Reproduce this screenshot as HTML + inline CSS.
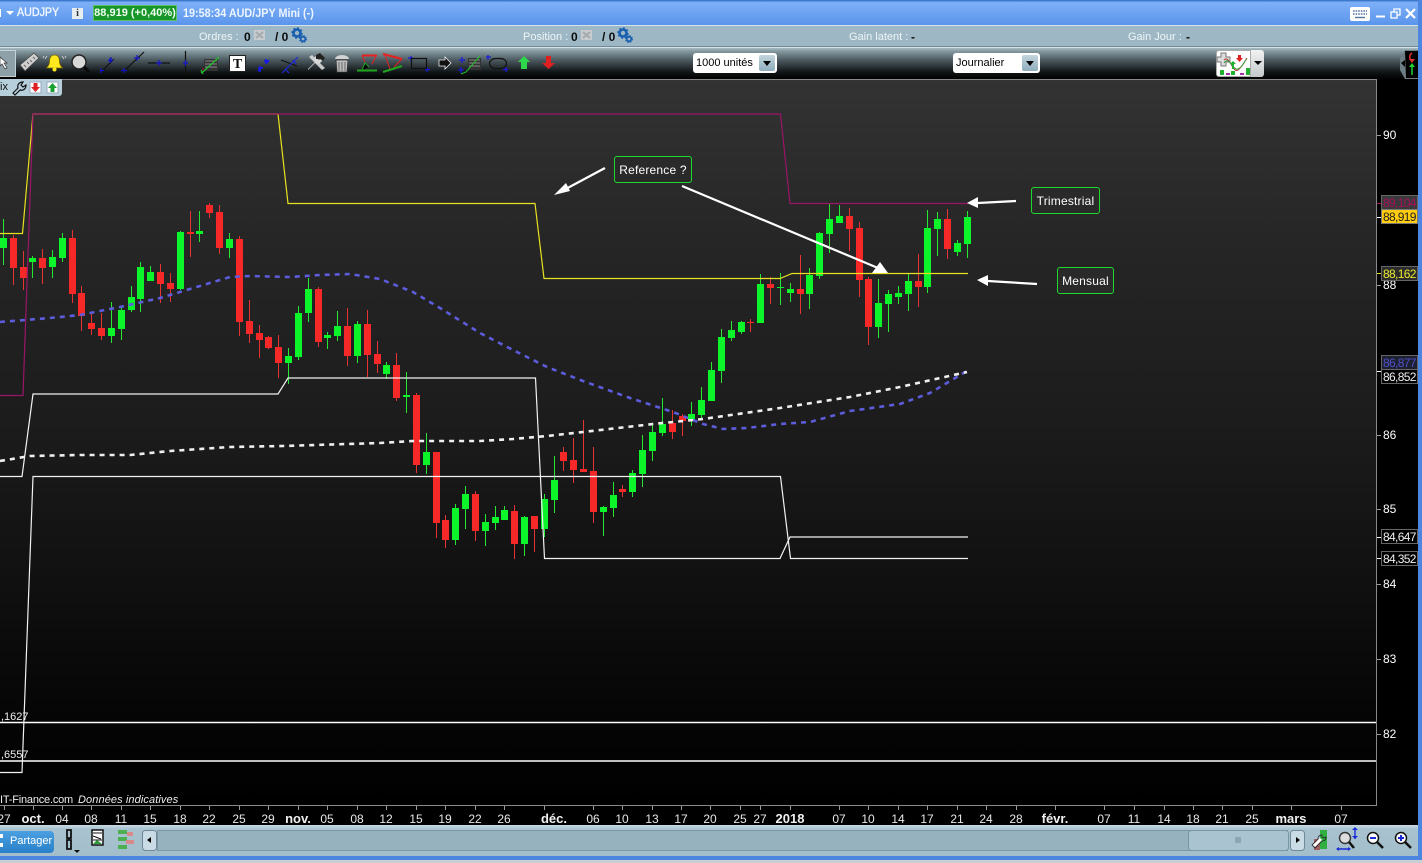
<!DOCTYPE html>
<html><head><meta charset="utf-8"><style>
html,body{margin:0;padding:0;background:#000}
#p{position:relative;width:1422px;height:863px;overflow:hidden;background:#000;font-family:"Liberation Sans",sans-serif;font-size:12px}
#p div,#p span.a{position:absolute;white-space:nowrap}
#tb{left:0;top:0;width:1422px;height:25px;background:linear-gradient(#3d78cf 0,#3d78cf 1px,#7eb0f8 2px,#5c96ec 24px)}
#r2{left:0;top:25px;width:1418px;height:22px;background:#9db8c4;border-top:1px solid #d5e3ea;border-bottom:1px solid #6f8a96;box-sizing:border-box}
#r3{left:0;top:47px;width:1418px;height:32px;background:linear-gradient(#a9bcc4 0,#8599a0 3px,#4c5a60 12px,#111517 24px,#000 31px);border-top:1px solid #d5e3ea;box-sizing:border-box}
#rb{left:1418px;top:0;width:4px;height:860px;background:#4d86e0}
.l{color:#eef4f7;font-size:11px;line-height:14px}
.b{color:#0b0b0b;font-weight:bold;font-size:12px;line-height:14px}
.sel{top:53px;height:20px;background:#fff;border-radius:3px;color:#000;font-size:11px;line-height:21px;padding-left:3px;box-sizing:border-box}
.sb{top:2px;width:16px;height:16px;background:linear-gradient(#c3d5de,#8fadbc);border-radius:2px}
.sb:after{content:"";position:absolute;left:4px;top:6px;border:4px solid transparent;border-top:5px solid #000;border-bottom:0}
.ax{color:#fff;font-size:12px;line-height:14px}
.t{top:812px;color:#e8e8e8;font-size:12px;transform:translateX(-50%);line-height:14px}
.t b{color:#f0f0f0;font-size:13px}
.vb{left:1381px;width:37px;height:15px;box-sizing:border-box;border:1px solid #666;font-size:12px;line-height:14px;text-indent:1px;letter-spacing:-.65px}
.n{border:1px solid #1fd92f;border-radius:3px;background:#2a2a2a;color:#fff;font-size:12px;text-align:center;box-sizing:border-box;letter-spacing:.2px}
</style></head><body><div id="p">

<div style="left:0;top:79px;width:1376px;height:727px;background:linear-gradient(#333 0,#262626 160px,#1c1c1c 340px,#0f0f0f 520px,#050505 640px,#000 727px)"></div>
<div id="tb"></div><div id="r2"></div><div id="r3"></div><div id="rb"></div>

<!-- chart -->
<svg style="position:absolute;left:0;top:0" width="1422" height="863" viewBox="0 0 1422 863">
<g fill="none">
<path stroke="#e63232" stroke-width="1" d="M13.5 235V285M23.5 251V290M42.5 249V284M72.5 230V303M81.5 286V331M91.5 313V335M101.5 313V340M160.5 264V303M170.5 273V302M190.5 211V257M209.5 203V218M219.5 205V254M239.5 236V336M249.5 300V343M259.5 325V358M268.5 336V349M278.5 335V378M318.5 287V347M347.5 308V366M367.5 310V377M377.5 341V373M396.5 353V401M416.5 393V473M436.5 452V538M445.5 515V548M475.5 491V541M514.5 505V559M534.5 516V552M563.5 447V471M573.5 438V483M583.5 420V472M593.5 447V523M622.5 485V497M672.5 410V439M682.5 414V436M750.5 319V332M770.5 277V304M800.5 255V314M849.5 208V251M859.5 222V297M868.5 277V345M918.5 254V307M947.5 209V259"/>
<path stroke="#26e832" stroke-width="1" d="M3.5 219V265M32.5 256V278M52.5 250V278M62.5 233V262M111.5 302V343M121.5 307V340M131.5 286V312M140.5 262V312M150.5 266V281M180.5 231V290M199.5 211V242M229.5 233V258M288.5 348V384M298.5 306V360M308.5 278V322M327.5 332V349M337.5 311V341M357.5 321V363M386.5 362V379M406.5 372V413M426.5 433V474M455.5 504V545M465.5 486V529M485.5 514V546M495.5 506V530M504.5 506V520M524.5 516V556M544.5 494V537M554.5 456V513M603.5 506V536M613.5 482V517M632.5 470V497M642.5 435V487M652.5 425V461M662.5 398V436M691.5 402V426M701.5 387V419M711.5 362V401M721.5 329V383M731.5 321V341M741.5 321V334M760.5 274V323M780.5 273V305M790.5 283V302M809.5 268V309M819.5 232V279M829.5 204V253M839.5 205V223M878.5 279V338M888.5 290V332M898.5 286V304M908.5 274V311M927.5 210V293M937.5 212V256M957.5 240V256M967.5 211V258"/>
<path stroke="#f62828" stroke-width="7" d="M13.5 238V268M23.5 267V278M42.5 258V268M72.5 238V294M81.5 293V316M91.5 323V329M101.5 328V336M160.5 272V284M170.5 283V289M190.5 232V234M209.5 205V213M219.5 212V248M239.5 239V322M249.5 321V334M259.5 333V340M268.5 337V348M278.5 347V363M318.5 289V342M347.5 326V356M367.5 324V355M377.5 354V364M396.5 365V398M416.5 395V465M436.5 452V523M445.5 520V540M475.5 494V531M514.5 511V544M534.5 516V529M563.5 452V461M573.5 460V470M583.5 469V472M593.5 471V512M622.5 489V492M672.5 423V432M682.5 416V421M750.5 322V323M770.5 284V288M800.5 289V294M849.5 216V229M859.5 228V280M868.5 279V327M918.5 281V287M947.5 219V249"/>
<path stroke="#0cf42a" stroke-width="7" d="M3.5 238V248M32.5 258V262M52.5 257V267M62.5 238V258M111.5 328V336M121.5 310V329M131.5 297V310M140.5 267V299M150.5 272V281M180.5 232V289M199.5 231V234M229.5 239V248M288.5 356V363M298.5 313V357M308.5 289V313M327.5 335V338M337.5 326V336M357.5 324V356M386.5 365V374M406.5 395V397M426.5 452V465M455.5 508V540M465.5 494V509M485.5 522V531M495.5 517V523M504.5 510V520M524.5 517V544M544.5 499V529M554.5 480V500M603.5 507V512M613.5 495V508M632.5 473V492M642.5 450V474M652.5 432V451M662.5 424V433M691.5 414V420M701.5 400V415M711.5 370V401M721.5 337V371M731.5 330V338M741.5 322V332M760.5 284V323M780.5 287V288M790.5 289V293M809.5 275V294M819.5 233V276M829.5 219V234M839.5 216V223M878.5 303V327M888.5 294V304M898.5 293V297M908.5 281V294M927.5 228V287M937.5 219V229M957.5 243V252M967.5 217V244"/>
<path stroke="#e8e020" stroke-width="1.2" d="M0 233.5H22.5L33 114H278L288 203.5H535L544 278.5H780L792 273.5H968"/>
<path stroke="#9a1568" stroke-width="1.2" d="M0 395.5H23L33 114H780.5L790 203.5H968"/>
<path stroke="#f2f2f2" stroke-width="1.2" d="M0 476.5H22L33 394H278L288 378H535.5L544.5 558.5H780L790 537H968"/>
<path stroke="#f2f2f2" stroke-width="1.2" d="M0 772.5H22L33 476.5H780.5L790.5 558.5H968"/>
<path stroke="#fff" stroke-width="1.4" d="M0 722.5H1376M0 761H1376"/>
<path stroke="#5c5cdc" stroke-width="2.6" stroke-dasharray="5 5" stroke-linejoin="round" d="M0 322L50 318L80 315L120 307L160 298L200 286L230 277L250 276L290 277L320 275L350 274L380 279L413 292L440 308L480 333L513 350L547 367L583 381L630 398L673 412L703 424L723 429L747 428L780 424L810 422L850 411L900 404L930 393L967 371"/>
<path stroke="#efefef" stroke-width="2.6" stroke-dasharray="5 5" stroke-linejoin="round" d="M0 461L30 456L80 455L130 455L170 451L230 447L283 446L380 443L413 441L447 441L480 441L513 439L547 436L583 432L653 424L703 419L780 408L850 397L900 387L967 372"/>
<path stroke="#fff" stroke-width="2.2" d="M605 168L562 191M682 186L878 268M1016 201L978 203M1037 284L988 281"/>
</g>
<path fill="#fff" d="M554 195L566 183L570 191ZM888 273L872 273L880 262ZM967 203L978 197L978 208ZM977 280L988 275L988 286Z"/>
<!-- frame -->
<path fill="none" stroke="#8a8a8a" d="M0 79.5H1376.5V805.5H0"/>
<path stroke="#9a9a9a" fill="none" d="M4.5 806V810M33.5 806V810M62.5 806V810M91.5 806V810M121.5 806V810M150.5 806V810M180.5 806V810M209.5 806V810M239.5 806V810M268.5 806V810M298.5 806V810M327.5 806V810M357.5 806V810M386.5 806V810M416.5 806V810M445.5 806V810M475.5 806V810M504.5 806V810M544.5 806V810M593.5 806V810M622.5 806V810M652.5 806V810M681.5 806V810M710.5 806V810M740.5 806V810M760.5 806V810M790.5 806V810M839.5 806V810M868.5 806V810M898.5 806V810M927.5 806V810M957.5 806V810M986.5 806V810M1016.5 806V810M1055.5 806V810M1104.5 806V810M1134.5 806V810M1164.5 806V810M1193.5 806V810M1222.5 806V810M1252.5 806V810M1291.5 806V810M1341.5 806V810M1377 135.5H1381M1377 285.5H1381M1377 435.5H1381M1377 509.5H1381M1377 584.5H1381M1377 659.5H1381M1377 734.5H1381"/>
<path stroke="#9a1568" d="M1377 203.5H1381"/><path stroke="#fff" d="M1377 217.5H1381M1377 371.5H1381M1377 537.5H1381M1377 558.5H1381"/><path stroke="#e8e020" d="M1377 273.5H1381"/>
</svg>

<!-- notes -->
<div class="n" style="left:614px;top:156px;width:78px;height:27px;line-height:27px">Reference ?</div>
<div class="n" style="left:1031px;top:187px;width:69px;height:27px;line-height:27px">Trimestrial</div>
<div class="n" style="left:1057px;top:267px;width:57px;height:27px;line-height:27px">Mensual</div>

<!-- y axis -->
<div class="ax" style="left:1383px;top:128px">90</div>
<div class="ax" style="left:1383px;top:278px">88</div>
<div class="ax" style="left:1383px;top:428px">86</div>
<div class="ax" style="left:1383px;top:502px">85</div>
<div class="ax" style="left:1383px;top:577px">84</div>
<div class="ax" style="left:1383px;top:652px">83</div>
<div class="ax" style="left:1383px;top:727px">82</div>
<div class="vb" style="top:195px;background:#3a3a3a;color:#a8105f">89,104</div>
<div class="vb" style="top:209px;background:#ffcc10;color:#222;border-color:#777">88,919</div>
<div class="vb" style="top:266px;background:#2b2b2b;color:#eaea30">88,162</div>
<div class="vb" style="top:355px;background:#1d2030;color:#5050c8">86,877</div>
<div class="vb" style="top:369px;background:#000;color:#f0f0f0">86,852</div>
<div class="vb" style="top:529px;background:#000;color:#f0f0f0">84,647</div>
<div class="vb" style="top:551px;background:#000;color:#f0f0f0">84,352</div>
<div class="ax" style="left:1px;top:710px;font-size:11px;color:#eee">,1627</div>
<div class="ax" style="left:1px;top:748px;font-size:11px;color:#eee">,6557</div>
<div class="ax" style="left:0;top:793px;font-size:11px;color:#eee;letter-spacing:-.2px">IT-Finance.com</div>
<div class="ax" style="left:78px;top:793px;font-size:11px;color:#eee;letter-spacing:.1px"><i>Données indicatives</i></div>

<!-- x axis -->
<div class="t" style="left:4px">27</div><div class="t" style="left:33px"><b>oct.</b></div><div class="t" style="left:62px">04</div><div class="t" style="left:91px">08</div><div class="t" style="left:121px">11</div><div class="t" style="left:150px">15</div><div class="t" style="left:180px">18</div><div class="t" style="left:209px">22</div><div class="t" style="left:239px">25</div><div class="t" style="left:268px">29</div><div class="t" style="left:298px"><b>nov.</b></div><div class="t" style="left:327px">05</div><div class="t" style="left:357px">08</div><div class="t" style="left:386px">12</div><div class="t" style="left:416px">15</div><div class="t" style="left:445px">19</div><div class="t" style="left:475px">22</div><div class="t" style="left:504px">26</div><div class="t" style="left:554px"><b>déc.</b></div><div class="t" style="left:593px">06</div><div class="t" style="left:622px">10</div><div class="t" style="left:652px">13</div><div class="t" style="left:681px">17</div><div class="t" style="left:710px">20</div><div class="t" style="left:740px">25</div><div class="t" style="left:760px">27</div><div class="t" style="left:790px"><b>2018</b></div><div class="t" style="left:839px">07</div><div class="t" style="left:868px">10</div><div class="t" style="left:898px">14</div><div class="t" style="left:927px">17</div><div class="t" style="left:957px">21</div><div class="t" style="left:986px">24</div><div class="t" style="left:1016px">28</div><div class="t" style="left:1055px"><b>févr.</b></div><div class="t" style="left:1104px">07</div><div class="t" style="left:1134px">11</div><div class="t" style="left:1164px">14</div><div class="t" style="left:1193px">18</div><div class="t" style="left:1222px">21</div><div class="t" style="left:1252px">25</div><div class="t" style="left:1291px"><b>mars</b></div><div class="t" style="left:1341px">07</div>

<!-- title bar -->
<div style="left:17px;top:6px;color:#f4f8ff;font-size:11.5px;line-height:14px;-webkit-text-stroke:.35px #f4f8ff;transform-origin:0 0;transform:scaleX(.93)">AUDJPY</div>
<div style="left:93px;top:5px;width:84px;height:16px;background:#17962a;border:1px solid #5fc06a;box-sizing:border-box;color:#f0fff0;font-size:11px;font-weight:bold;line-height:14px;text-align:center">88,919 (+0,40%)</div>
<div style="left:183px;top:6px;color:#eef5ff;font-size:12px;font-weight:bold;line-height:14px;transform-origin:0 0;transform:scaleX(.9)">19:58:34 AUD/JPY Mini (-)</div>
<div style="left:72px;top:8px;width:11px;height:11px;background:#e8eef0;color:#333;font:bold 10px/11px 'Liberation Serif',serif;text-align:center">i</div>
<svg style="position:absolute;left:0;top:0" width="1422" height="25">
<path fill="#fff" d="M6 11h8l-4 4z"/><rect x="0" y="9" width="1" height="8" fill="#fff"/>
<rect x="1350" y="7" width="20" height="14" rx="2" fill="#fff"/>
<path stroke="#5578a0" stroke-width="1.4" stroke-dasharray="1.6 1" d="M1353 11h14M1353 14h14"/><path stroke="#5578a0" stroke-width="1.4" d="M1355 17.500h10"/>
<path stroke="#fff" stroke-width="2" d="M1376 16.500h9"/>
<path fill="none" stroke="#fff" stroke-width="1.3" d="M1391 12h6v6h-6zM1394 12V9h6v6h-3"/>
<path stroke="#fff" stroke-width="2.200" d="M1406 9l9 9M1415 9l-9 9"/>
</svg>

<!-- order row -->
<div class="l" style="left:199px;top:30px">Ordres :</div><div class="b" style="left:244px;top:30px">0</div>
<div class="b" style="left:275px;top:30px">/ 0</div>
<div class="l" style="left:523px;top:30px">Position :</div><div class="b" style="left:571px;top:30px">0</div>
<div class="b" style="left:602px;top:30px">/ 0</div>
<div class="l" style="left:849px;top:30px">Gain latent :</div><div class="b" style="left:911px;top:30px">-</div>
<div class="l" style="left:1128px;top:30px">Gain Jour :</div><div class="b" style="left:1186px;top:30px">-</div>
<svg style="position:absolute;left:0;top:25px" width="700" height="22">
<rect x="254" y="5" width="11" height="10" fill="#c8ccce"/><path stroke="#a4aaae" stroke-width="2" d="M256 7l7 6M263 7l-7 6"/>
<rect x="581" y="5" width="11" height="10" fill="#c8ccce"/><path stroke="#a4aaae" stroke-width="2" d="M583 7l7 6M590 7l-7 6"/>
<g fill="none" stroke="#1a5fb0">
<circle cx="297" cy="8" r="3.500" stroke-width="2.600"/><circle cx="297" cy="8" r="5" stroke-width="1.400" stroke-dasharray="2 1.900"/>
<circle cx="303" cy="14" r="2.300" stroke-width="1.800"/><circle cx="303" cy="14" r="3.500" stroke-width="1" stroke-dasharray="1.500 1.300"/>
<circle cx="623" cy="8" r="3.500" stroke-width="2.600"/><circle cx="623" cy="8" r="5" stroke-width="1.400" stroke-dasharray="2 1.900"/>
<circle cx="629" cy="14" r="2.300" stroke-width="1.800"/><circle cx="629" cy="14" r="3.500" stroke-width="1" stroke-dasharray="1.500 1.300"/>
</g>
</svg>

<!-- toolbar -->
<div style="left:0;top:50px;width:16px;height:27px;background:#8ea1a8;border:1px solid #c4d2d8;border-left:0;box-sizing:border-box"></div>
<svg style="position:absolute;left:0;top:47px" width="570" height="32">
<path fill="#fff" stroke="#333" stroke-width=".7" d="M0 10l7 6-3 0 3 5-2 1-3-5-2 2z"/>
<path fill="#cfcfcf" stroke="#444" stroke-width=".8" d="M20 18L34 6l5 5L25 24z"/><path stroke="#666" d="M24 18l2 2M27 15l2 2M30 13l2 2M33 10l2 2"/>
<path fill="#ffe81e" stroke="#7a6a00" stroke-width=".8" d="M54.500 8c3.500 0 5 3 5 7 0 3 1.500 4 3 6H46.500c1.500-2 3-3 3-6 0-4 1.500-7 5-7z"/><circle cx="54.500" cy="22.500" r="2" fill="#ffe81e"/>
<path fill="none" stroke="#c8c8c8" d="M47 9l-2 3M62 9l2 3M44 9l-1 2M65 9l1 2"/>
<circle cx="79" cy="15" r="7" fill="#d8d8d8" stroke="#222" stroke-width="1.500"/><path stroke="#0a0a0a" stroke-width="3.200" d="M84 20l5 5"/>
<g stroke="#1516c8" stroke-width="1.200" fill="none">
<path stroke="#111" d="M102 24L114 12M123 25L144 5M148 16h22M185.500 4V29"/>
<path d="M101 21v5M100 23.500h4M110 11v5M108 13.500h5M111 10v5M124 21v5M121 23.500h6M137 8v6M134 11h6M159 13v6M156 16h6M185.500 13v6M183 16h5"/>
<path stroke="#1a1ae0" stroke-width="1.700" d="M258 24l4-4M266 17l3-4M258 21h5M260 19v6M266 12v5M264 14h5"/>
<path stroke="#111" d="M281 13l16 6"/><path stroke="#1a2ad8" stroke-width="1.200" d="M282 26L298 10M285 22l4 4M293 13l3 4"/>
<path stroke="#1a1ae0" d="M411 9v5M408 11h5M427 20v5M425 22.500h5M462 10v6M459 13h6M461 20v6M458 23h6M488 8v5M486 10h5M506 20v5M503 22.500h5"/>
</g>
<rect x="204" y="12" width="14" height="12" fill="#333"/><path stroke="#888" d="M205 14h12M205 17h12M205 20h12"/><path stroke="#22c030" fill="none" stroke-width="1.300" d="M201 26l3-2 15-14M201 23l2 4"/>
<path stroke="#c03" d="M202 22h2"/>
<rect x="229.500" y="8.500" width="16" height="16" fill="#fff" stroke="#222"/>
<text x="237.500" y="21" font-family="Liberation Serif,serif" font-size="14" font-weight="bold" text-anchor="middle" fill="#111">T</text>
<path fill="#d8d8d8" d="M308 22l7-7-1-4 4-4 2 1-3 3 2 2 3-2 1 2-4 4-4-1-7 7z"/><path fill="#222" d="M316 8l4-2 5 5-2 3-3-2-4 0z"/><path fill="#d8d8d8" d="M309 10l3-2 13 13-3 2z" opacity=".9"/>
<path fill="#bdbdbd" stroke="#333" stroke-width=".8" d="M336 13h12l-1 12h-10z"/><path fill="#d4d4d4" d="M335 12c0-2 3-4 7-4s7 2 7 4z"/><path stroke="#666" d="M339 15v9M342 15v9M345 15v9"/>
<path stroke="#e82020" stroke-width="2" d="M362 8.500h15"/><path stroke="#1fa81f" stroke-width="2" d="M357 23.500h20"/><path stroke="#e82020" d="M362 9l3 6"/><path stroke="#1fa81f" d="M362 23l3-7 4 4"/><path stroke="#e82020" d="M376 9l-4 8"/>
<path stroke="#e82020" stroke-width="2" d="M383 7l19 5"/><path stroke="#1fa81f" stroke-width="2" d="M383 25l19-6"/><path stroke="#e82020" d="M385 8l5 14M402 12l-8 8"/>
<rect x="411.500" y="11.500" width="15" height="10" fill="none" stroke="#111" stroke-width="1.200"/>
<path fill="#111" stroke="#eee" stroke-width=".8" d="M439 13h6v-3l6 6-6 6v-3h-6z"/>
<rect x="468" y="11" width="13" height="12" fill="#333"/><path stroke="#888" d="M469 13h11M469 16h11M469 19h11"/><path stroke="#22c030" fill="none" d="M461 27l5-2 14-16"/>
<rect x="489.500" y="11.500" rx="6" width="17" height="10" fill="none" stroke="#111" stroke-width="1.200"/>
<path fill="#2ed84a" d="M524 9l6 6h-3v7h-6v-7h-3z"/>
<path fill="#e02020" d="M546 9h5v7h4l-6.500 6-6.500-6h4z"/>
</svg>

<div class="sel" style="left:693px;width:84px">1000 unités<div class="sb" style="left:66px"></div></div>
<div class="sel" style="left:953px;width:87px">Journalier<div class="sb" style="left:69px"></div></div>

<div style="left:1216px;top:50px;width:35px;height:27px;background:#fff;border-radius:3px 0 0 3px;border:1px solid #aaa;box-sizing:border-box"></div>
<div style="left:1251px;top:50px;width:13px;height:27px;background:linear-gradient(#f2f2f2,#c4c8ca);border-radius:0 3px 3px 0"></div>
<svg style="position:absolute;left:1216px;top:50px" width="48" height="27">
<path d="M5 3h5v4h4v5h-4v4H5v-4H1V7h4z" fill="#ddd" stroke="#777"/>
<path fill="none" stroke="#b03030" d="M8 10c5-6 9 14 14 10s6-8 9-12"/><path fill="none" stroke="#3aa03a" d="M8 13c5-8 9 8 14 6s6-8 9-10"/>
<path fill="#1fb030" d="M14 14l3-3 3 3h-2v5h-2v-5zM4 20h4v5H4zM15 21h4v4h-4zM30 18h4v7h-4z"/><path fill="#a030a0" d="M10 23h4v2h-4zM24 23h4v2h-4z"/><path fill="#e02020" d="M22 5h3v3h2l-3.500 4L20 8h2z"/>
<path fill="#000" d="M38 11h8l-4 4z"/>
</svg>
<svg style="position:absolute;left:1400px;top:48px" width="18" height="32">
<path fill="#6d7d84" d="M0 10L5 2H18V31H5L0 22z"/><path fill="#000" d="M5 3H18V30H6z"/>
<path fill="#000" d="M1 15l4-3v7z"/>
<path stroke="#e03030" fill="none" stroke-width="1.500" d="M12 5c-3 2-3 6 0 8"/><path stroke="#20d030" fill="none" stroke-width="1.500" d="M12 27V17"/><path fill="#20d030" d="M9 19l3-4 3 4z"/><path fill="#e03030" d="M9 11l3 4 3-4z"/>
</svg>

<!-- bottom bar -->
<div style="left:0;top:825px;width:1418px;height:31px;background:linear-gradient(#c9dbe4,#a8c3cf 4px,#a3becb)"></div>
<div style="left:0;top:856px;width:1422px;height:4px;background:#4d86e0"></div>
<div style="left:0;top:860px;width:1422px;height:3px;background:#c9cfd4"></div>
<div style="left:-4px;top:831px;width:58px;height:22px;background:linear-gradient(#4aa0e0,#2a80c8);border-radius:4px;color:#fff;font-size:11px;line-height:21px;text-indent:14px">Partager</div>
<svg style="position:absolute;left:0;top:825px" width="1422" height="31">
<path fill="#fff" d="M0 9h3v4H0zM0 18h3v4H0z"/>
<path fill="none" stroke="#111" stroke-width="1.800" d="M67 5h4v8h-4zM67 15h4v9h-4zM69 13v2"/><path fill="#111" d="M74 25h6l-3 3z"/>
<rect x="92" y="5" width="11" height="15" fill="#fff" stroke="#111" stroke-width="1.500"/><path stroke="#111" d="M93 8h9M93 11l8 3M93 15h9"/><path fill="#2a9a3a" d="M93 19l4-4 5 4z"/>
<path fill="#4cb050" d="M118 5h9v4h-9zM118 12h9v4h-9zM118 20h9v4h-9z"/><path fill="#d88a8a" d="M127 7h6v4h-6zM126 15h8v4h-8z"/>
<rect x="142.500" y="5.500" width="14" height="20" rx="3" fill="#c9dbe4" stroke="#6f8a96"/><path fill="#000" d="M151 12v6l-4-3z"/>
<rect x="157.500" y="5.500" width="1130" height="20" fill="#96b2bf" stroke="#7c97a4"/>
<rect x="1188.500" y="5.500" width="100" height="20" rx="3" fill="#a9c3d0" stroke="#7c97a4"/><path stroke="#6d8a98" d="M1235 13h6M1235 15h6M1235 17h6"/>
<rect x="1290.500" y="5.500" width="14" height="20" rx="3" fill="#c9dbe4" stroke="#6f8a96"/><path fill="#000" d="M1296 12v6l4-3z"/>
<rect x="1314" y="14" width="6" height="11" fill="#a06060"/><rect x="1320" y="5" width="7" height="19" fill="#30b040"/>
<path stroke="#fff" stroke-width="3" fill="none" d="M1314 21l7-7"/><path stroke="#222" stroke-width=".8" fill="none" d="M1312 20l3 3 7-7c2 0 4-1 4-4l-2 1-2-1 0-2c-3 0-4 2-4 4z"/>
<circle cx="1345" cy="13" r="5.500" fill="#ddd" stroke="#333" stroke-width="1.400"/><path stroke="#111" stroke-width="2.500" d="M1349 17l5 6"/>
<path stroke="#1a2ad8" stroke-width="1.400" d="M1355 3v11M1339 24h9"/><path fill="#1a2ad8" d="M1352 5l3-3 3 3zM1352 11l3 3 3-3zM1339 22v4l-3-2zM1348 22v4l3-2z"/>
<circle cx="1373" cy="13" r="5.500" fill="#fff" stroke="#111" stroke-width="1.500"/><path stroke="#1a2ad8" stroke-width="2" d="M1370 13h6"/><path stroke="#111" stroke-width="2.500" d="M1377 17l6 6"/>
<circle cx="1401" cy="13" r="5.500" fill="#fff" stroke="#111" stroke-width="1.500"/><path stroke="#1a2ad8" stroke-width="2" d="M1398 13h6M1401 10v6"/><path stroke="#111" stroke-width="2.500" d="M1405 17l6 6"/>
</svg>

<!-- left small tool panel -->
<div style="left:0;top:79px;width:62px;height:17px;background:#b6cfdb;border-radius:0 0 3px 0"></div>
<div style="left:0;top:81px;color:#111;font-size:11px;line-height:13px">ix</div>
<svg style="position:absolute;left:0;top:79px" width="62" height="17">
<path fill="none" stroke="#111" stroke-width="1.200" d="M13 14l5-5c-1-3 1-6 5-6l-2 3 2 2 3-2c0 4-3 6-6 5l-5 5z"/>
<rect x="30" y="3" width="11" height="11" fill="#fff" stroke="#9ab"/><path fill="#e02020" d="M33.500 4h4v4h2.500l-4.500 5-4.500-5h2.500z"/>
<rect x="47" y="3" width="11" height="11" fill="#fff" stroke="#9ab"/><path fill="#19a030" d="M52.500 4l4.500 5h-2.500v4h-4V9H48z"/>
</svg>

</div></body></html>
